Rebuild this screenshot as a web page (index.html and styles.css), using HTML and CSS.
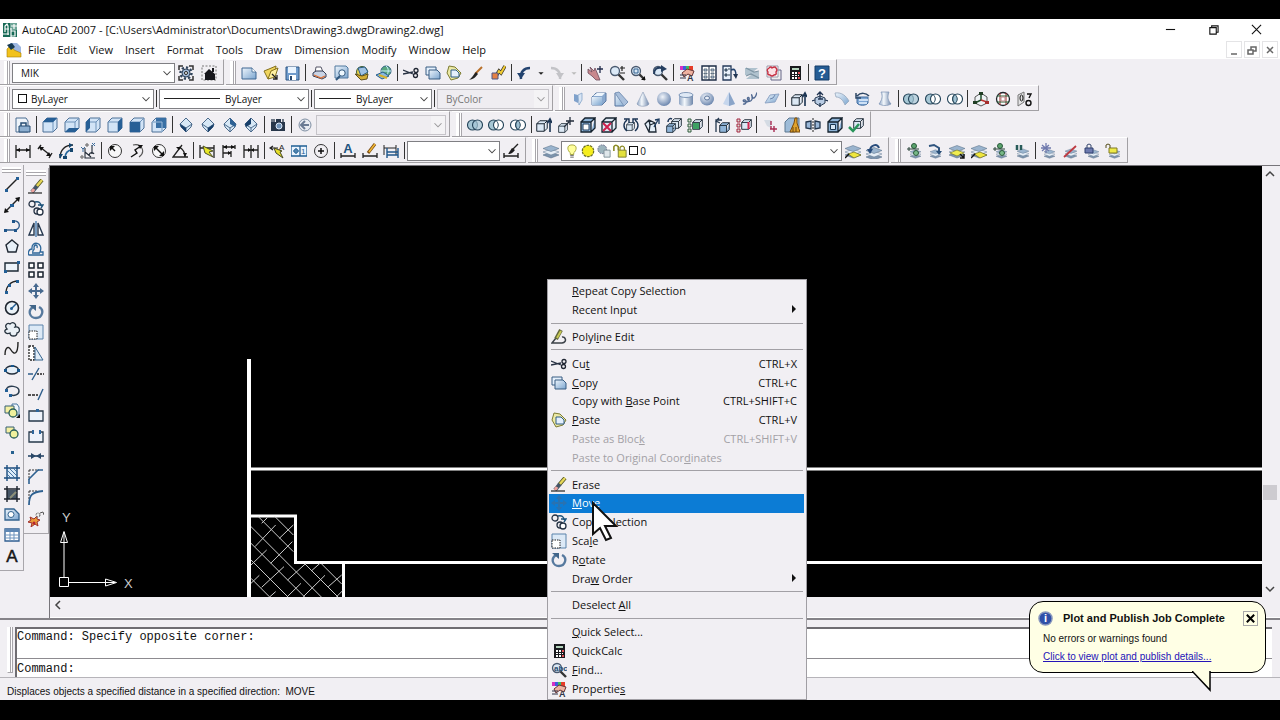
FILE: index.html
```html
<!DOCTYPE html>
<html lang="en">
<head>
<meta charset="utf-8">
<title>AutoCAD 2007</title>
<link rel="stylesheet" href="styles.css">
</head>
<body>
<svg class="sprite" aria-hidden="true">
<defs>
<linearGradient id="gb" x1="0" y1="0" x2="1" y2="1"><stop offset="0" stop-color="#eef5fc"/><stop offset="1" stop-color="#7ba5cf"/></linearGradient>
<linearGradient id="gs" x1="0" y1="0" x2="1" y2="0"><stop offset="0" stop-color="#8fa5c4"/><stop offset=".4" stop-color="#f4f8fc"/><stop offset="1" stop-color="#6f87ab"/></linearGradient>
<radialGradient id="gr" cx=".4" cy=".35" r=".7"><stop offset="0" stop-color="#f0f4fa"/><stop offset="1" stop-color="#6480aa"/></radialGradient>
</defs>
<!-- shared parts -->
<symbol id="cb" viewBox="0 0 16 16"><path d="M1 5h10v10H1zM1 5l4-4h10l-4 4M15 1v10l-4 4" fill="#dce8f4" stroke="#15222e" stroke-width="1.300"/></symbol>
<symbol id="cbb" viewBox="0 0 16 16"><path d="M1 5h10v10H1zM1 5l4-4h10l-4 4M15 1v10l-4 4" fill="#8fb4d8" stroke="#15222e" stroke-width="1.300"/></symbol>
<symbol id="ly" viewBox="0 0 16 16"><path d="M0 12l8-3 8 3-8 3z" fill="#7d94ad" stroke="#506880" stroke-width=".5"/><path d="M0 9l8-3 8 3-8 3z" fill="#e6eef6" stroke="#607890" stroke-width=".5"/><path d="M0 5.500l8-3 8 3-8 3z" fill="#9ab4ce" stroke="#506880" stroke-width=".5"/></symbol>
<symbol id="mg" viewBox="0 0 16 16"><path d="M9 9l6 6" stroke="#333" stroke-width="2.400"/><circle cx="6" cy="6" r="4.500" fill="#dbe9f7" stroke="#4a5a70" stroke-width="1.300"/></symbol>
<symbol id="chev" viewBox="0 0 16 16"><path d="M4 6l4 4 4-4" fill="none" stroke="#444" stroke-width="1.200"/></symbol>
<!-- application -->
<symbol id="app" viewBox="0 0 16 16"><path d="M1 1h14v14H1z" fill="#176a56"/><path d="M8 1h7v7H8z" fill="#6ea597"/><path d="M3 10V4l2-2 1 2v9M3 7h4M9 6v9M9 9h4v5H9M1 12h6M12 2v5M9 4h6" fill="none" stroke="#fff" stroke-width="1.200"/></symbol>
<symbol id="doc" viewBox="0 0 16 16"><path d="M4 1h7l4 4v9H4z" fill="#9db7e0"/><path d="M1 15V7l4-4 3 5 7 3v4z" fill="#f2c21c" stroke="#a67c08" stroke-width=".6"/><path d="M1 3l5-2 3 4-4 3z" fill="#173a52"/></symbol>
<symbol id="gear" viewBox="0 0 16 16"><path d="M1 5V1h4M11 1h4v4M15 11v4h-4M5 15H1v-4" fill="none" stroke="#333" stroke-width="1.500"/><circle cx="8" cy="8" r="5.500" fill="none" stroke="#31445c" stroke-width="2.500" stroke-dasharray="2.200 2"/><circle cx="8" cy="8" r="4" fill="#9fb7d6" stroke="#31445c"/><circle cx="8" cy="8" r="1.500" fill="#fff" stroke="#222"/></symbol>
<symbol id="home" viewBox="0 0 16 16"><path d="M1 1h14v14H1z" fill="none" stroke="#777" stroke-dasharray="2 1.500"/><path d="M3 9l5-5 6 5v6H4V9z" fill="#17171c"/><path d="M11 3h2v4h-2z" fill="#17171c"/></symbol>
<!-- standard -->
<symbol id="new" viewBox="0 0 16 16"><path d="M1 3h10l4 4v7H1z" fill="url(#gb)" stroke="#3f6792"/><path d="M11 3v4h4" fill="#fff" stroke="#3f6792" stroke-width=".8"/></symbol>
<symbol id="open" viewBox="0 0 16 16"><path d="M1 6l5-2 7-3-1 8-7 5z" fill="#f0d55e" stroke="#84701c"/><path d="M5 14L8 6l7-3-3 9z" fill="#fff0a0" stroke="#84701c"/><path d="M9 9l5 5M14 10v4h-4" fill="none" stroke="#222" stroke-width="1.300"/></symbol>
<symbol id="save" viewBox="0 0 16 16"><path d="M2 2h13v13H2z" fill="#6f9bcc" stroke="#2f5684"/><path d="M4 2h8v6H4z" fill="#eaf4ff"/><path d="M5 10h7v5H5z" fill="#fff"/><path d="M6 11h2v4H6z" fill="#264870"/></symbol>
<symbol id="print" viewBox="0 0 16 16"><path d="M4 8L5 2h5l2 5" fill="#fff" stroke="#556"/><path d="M2 8l3-2h7l3 3v3l-4 2-9-3z" fill="#c8d2e4" stroke="#333b52"/><path d="M3 10l7 3 4-2" fill="none" stroke="#e06f30" stroke-width="1.200"/></symbol>
<symbol id="preview" viewBox="0 0 16 16"><path d="M2 1h11l2 2v10H2z" fill="url(#gb)" stroke="#50789e"/><circle cx="9" cy="8" r="3.200" fill="#eef8ff" stroke="#31587e"/><path d="M7 11l-4 4" stroke="#31587e" stroke-width="2"/></symbol>
<symbol id="publish" viewBox="0 0 16 16"><circle cx="8" cy="7" r="5.500" fill="#e7cf48" stroke="#3e5e38"/><path d="M4 3l7-1 3 5-7 4z" fill="#9fc2e4" stroke="#2c5e86"/><path d="M1 9l7 2 6-2-1 5-6 1z" fill="#d4ae35" stroke="#60501c"/></symbol>
<symbol id="dwf" viewBox="0 0 16 16"><circle cx="10" cy="6" r="5" fill="#58a77e" stroke="#366785"/><path d="M10 1c3 2 3 7 0 10M5 6h10" fill="none" stroke="#cbefff"/><path d="M0 10l7-3 6 4-7 3z" fill="#87b8e0" stroke="#295f8c"/><path d="M3 10l8 3" stroke="#d7b22e" stroke-width="2"/></symbol>
<symbol id="cut" viewBox="0 0 16 16"><path d="M0 5l10 4M0 9l10-2" stroke="#283243" stroke-width="1.300"/><circle cx="13" cy="5.500" r="2" fill="none" stroke="#202632" stroke-width="1.300"/><circle cx="12.500" cy="10.500" r="2" fill="none" stroke="#202632" stroke-width="1.300"/></symbol>
<symbol id="copy" viewBox="0 0 16 16"><path d="M1 2h10v8H1z" fill="#e5f0fc" stroke="#385d82"/><path d="M4 5h8l3 3v6H4z" fill="url(#gb)" stroke="#385d82"/></symbol>
<symbol id="paste" viewBox="0 0 16 16"><path d="M3 1l6 1 6 6-3 5-7 2-4-7z" fill="#ece9a4" stroke="#7c7b32"/><path d="M5 5h5l3 3v4H5z" fill="#e4effc" stroke="#2d5b86"/></symbol>
<symbol id="brush" viewBox="0 0 16 16"><path d="M14 2L7 9" stroke="#b8702a" stroke-width="2"/><path d="M8 7l2 2c-3 4-5 5-9 6 3-2 4-5 7-8z" fill="#222"/></symbol>
<symbol id="block" viewBox="0 0 16 16"><path d="M15 1l-4 7-2-2-3 5" fill="none" stroke="#35322b" stroke-width="3.500"/><path d="M15 1l-4 7-2-2-3 5" fill="none" stroke="#f2cc32" stroke-width="2"/><path d="M2 8h6v6H2z" fill="#e58145" stroke="#4c5986"/></symbol>
<symbol id="undo" viewBox="0 0 16 16"><path d="M5 14C4 7 8 3 14 3" fill="none" stroke="#23436f" stroke-width="2.500"/><path d="M1 8h8l-4 6z" fill="#23436f"/></symbol>
<symbol id="redo" viewBox="0 0 16 16"><path d="M11 14C12 7 8 3 2 3" fill="none" stroke="#c3c3c7" stroke-width="2.500"/><path d="M15 8H7l4 6z" fill="#c3c3c7"/></symbol>
<symbol id="tri" viewBox="0 0 16 16"><path d="M5 7h6l-3 3z" fill="#222"/></symbol>
<symbol id="tric" viewBox="0 0 16 16"><path d="M5 7h6l-3 3z" fill="#bbb"/></symbol>
<symbol id="pan" viewBox="0 0 16 16"><path d="M1 4l4 3-2-5 4 4 1-3 3 7 2 5-4 0-4-4-4-3z" fill="#c8888d" stroke="#6d4b5c" stroke-width=".8"/><path d="M13 1v7M10 4h6" stroke="#232c4c" stroke-width="1.300"/></symbol>
<symbol id="zoomrt" viewBox="0 0 16 16"><use href="#mg"/><path d="M13 1v5M11 3h5M11 8h5" stroke="#222" stroke-width="1.200"/></symbol>
<symbol id="zoomw" viewBox="0 0 16 16"><use href="#mg"/><path d="M4 4h4v4H4z" fill="none" stroke="#31618e"/><path d="M15 11v4h-4z" fill="#111"/></symbol>
<symbol id="zoomp" viewBox="0 0 16 16"><use href="#mg"/><path d="M2 9c0-5 3-7 8-6" fill="none" stroke="#243d5f" stroke-width="2"/><path d="M9 0l6 4-6 3z" fill="#243d5f"/></symbol>
<symbol id="props" viewBox="0 0 16 16"><path d="M1 1h3v4H1z" fill="#d733c1"/><path d="M4 1h3v4H4z" fill="#4258e1"/><path d="M7 1h3v4H7z" fill="#36bd64"/><path d="M10 1h4v4h-4z" fill="#e63c28"/><path d="M3 8l5-4 7 2-2 5-4-2-4 3z" fill="#efb2a0" stroke="#633"/><path d="M1 10h6M1 13h6" fill="none" stroke="#303448" stroke-width="1.200"/><text x="8" y="15.500" font-size="9" font-weight="700" fill="#303448">A</text></symbol>
<symbol id="dc" viewBox="0 0 16 16"><path d="M1 1h14v14H1z" fill="#fff" stroke="#1c2c46" stroke-width="1.400"/><path d="M8 1v14" stroke="#1c2c46"/><path d="M3 4h3v2H3zM10 4h3v2h-3zM3 8h3v1H3zM10 8h3v1h-3zM3 11h3v2H3zM10 11h3v2h-3z" fill="#bbcde8" stroke="#456" stroke-width=".8"/></symbol>
<symbol id="tp" viewBox="0 0 16 16"><path d="M1 1h8v14H1z" fill="#eaf2fc" stroke="#253a5a" stroke-width="1.300"/><path d="M3 4h2v2H3zM3 9h2v2H3zM6 4h2M6 10h2" fill="#7390b5" stroke="#345"/><path d="M9 5c4-2 5 1 5 6" fill="none" stroke="#23426d" stroke-width="1.500"/><path d="M11 9h5l-2 5z" fill="#243753"/></symbol>
<symbol id="ssm" viewBox="0 0 16 16"><path d="M1 3h13l-5 4h6v7H2l5-4H1z" fill="#b0c2ce"/><path d="M2 3l8 4 5-1M2 11l5-2 8 4" fill="none" stroke="#7f95a4" stroke-width="1.200"/></symbol>
<symbol id="markup" viewBox="0 0 16 16"><path d="M5 5h10v10H5z" fill="#eee" stroke="#668"/><path d="M1 1h11v11H1z" fill="#fff" stroke="#99a"/><path d="M3 3q2-2 3 0 3-2 4 0 2 2 0 4 1 3-2 3-2 2-4 0-3 0-2-3-2-2 1-4z" fill="#fbe0e4" stroke="#c52f42" stroke-width="1.400"/></symbol>
<symbol id="calc" viewBox="0 0 16 16"><path d="M3 1h11v14H3z" fill="#191a1e"/><path d="M5 3h7v2H5z" fill="#b4d3bc"/><path d="M5 7h2v2H5zM8 7h2v2H8zM5 10h2v1H5zM8 10h2v1H8zM5 12h2v2H5zM8 12h2v2H8zM11 10h1v1h-1z" fill="#fff"/><path d="M11 7h2v2h-2zM11 12h2v2h-2z" fill="#df5054"/></symbol>
<symbol id="help" viewBox="0 0 16 16"><path d="M1 1h14v14H1z" fill="#255c94" stroke="#153c68"/><text x="8" y="13" font-size="13" font-weight="700" text-anchor="middle" fill="#fff">?</text></symbol>
<!-- modelling -->
<symbol id="psolid" viewBox="0 0 16 16"><path d="M4 3l4 1v8l-4-2z" fill="#7fa1cb"/><path d="M8 4l4-2v7l-3 5z" fill="#d8e5f5" stroke="#85a4c8" stroke-width=".8"/></symbol>
<symbol id="box" viewBox="0 0 16 16"><path d="M1 6l4-4h10v8l-4 4H1z" fill="#8aa9cf" stroke="#5c7ba4"/><path d="M1 6h10v8H1z" fill="url(#gb)"/><path d="M2 5l4-3h8l-3 3z" fill="#eef5fc"/></symbol>
<symbol id="wedge" viewBox="0 0 16 16"><path d="M2 2l13 9-4 4H2z" fill="url(#gb)" stroke="#54739d"/><path d="M2 2l4-1 9 10-4 4z" fill="#a9bfdb" stroke="#7b95b8"/></symbol>
<symbol id="cone" viewBox="0 0 16 16"><path d="M8 1l6 12c-2 3-10 3-12 0z" fill="url(#gs)" stroke="#8497b3" stroke-width=".6"/></symbol>
<symbol id="sphere" viewBox="0 0 16 16"><circle cx="8" cy="8" r="7" fill="url(#gr)"/></symbol>
<symbol id="cyl" viewBox="0 0 16 16"><path d="M1 4v9c2 3 12 3 14 0V4z" fill="url(#gs)"/><ellipse cx="8" cy="4" rx="7" ry="2.500" fill="#dfe9f5" stroke="#6985ab" stroke-width=".8"/></symbol>
<symbol id="torus" viewBox="0 0 16 16"><ellipse cx="8" cy="8" rx="7" ry="6.500" fill="url(#gr)"/><ellipse cx="8" cy="7" rx="2.500" ry="2" fill="#e9eff7" stroke="#5d769c"/></symbol>
<symbol id="pyr" viewBox="0 0 16 16"><path d="M8 1l6 12-6 2-6-2z" fill="#c6d6ed"/><path d="M8 1l6 12-6 2z" fill="#8aa4c8"/></symbol>
<symbol id="helix" viewBox="0 0 16 16"><path d="M1 13c4 1 4-5 1-4s4 4 5 0-3-3-1 0 5 0 4-4 0 3 2 2 3-5 2-5" fill="none" stroke="#526a92" stroke-width="1.400"/></symbol>
<symbol id="plane" viewBox="0 0 16 16"><path d="M1 12l5-8 9-1-4 8z" fill="url(#gb)" stroke="#8fa5c6"/><path d="M6 8l3-1 2-3" fill="none" stroke="#6d86ae"/></symbol>
<symbol id="extrude" viewBox="0 0 16 16"><use href="#cb" y="3" width="12" height="12"/><path d="M14 4v11M11.500 6L14 2l2 4" fill="none" stroke="#1a3352" stroke-width="1.600"/></symbol>
<symbol id="pull" viewBox="0 0 16 16"><path d="M3 7l5-2 5 2v5l-5 3-5-3z" fill="#b8cbe3" stroke="#26384f"/><path d="M8 8V1M5 4l3-3 3 3M3 9L0 10M13 9l3 1M8 12v4M6 8h5" fill="none" stroke="#223552" stroke-width="1.300"/></symbol>
<symbol id="sweep" viewBox="0 0 16 16"><path d="M1 2c7-1 11 3 14 8l-4 4C9 9 6 6 2 6z" fill="url(#gb)" stroke="#96a7bd" stroke-width=".8"/></symbol>
<symbol id="revolve" viewBox="0 0 16 16"><path d="M2 6h11v6c-2 3-9 3-11 0z" fill="#7da6d4" stroke="#426d9e"/><path d="M4 9h9M4 12h8" stroke="#e8f4ff" stroke-width="1.400"/><path d="M2 5c4-4 9-3 12 0M1 2v5h5" fill="none" stroke="#2d4766" stroke-width="1.500"/></symbol>
<symbol id="loft" viewBox="0 0 16 16"><path d="M4 1h8c-2 6-1 8 2 12-4 2-8 2-12 0C5 9 6 5 4 1z" fill="url(#gs)" stroke="#7d93b4" stroke-width=".7"/></symbol>
<symbol id="union" viewBox="0 0 16 16"><circle cx="5.500" cy="8" r="5" fill="#a6c7d5" stroke="#25455a" stroke-width="1.100"/><circle cx="10.500" cy="8" r="5" fill="#a6c7d5" fill-opacity=".7" stroke="#25455a" stroke-width="1.100"/></symbol>
<symbol id="subtract" viewBox="0 0 16 16"><circle cx="5.500" cy="8" r="5" fill="#a6c7d5" stroke="#25455a" stroke-width="1.100"/><circle cx="10.500" cy="8" r="5" fill="#fff" stroke="#25455a" stroke-width="1.100"/><path d="M8 3.500c3 3 3 6 0 9" fill="none" stroke="#25455a"/></symbol>
<symbol id="intersect" viewBox="0 0 16 16"><circle cx="5.500" cy="8" r="5" fill="#fff" stroke="#25455a" stroke-width="1.100"/><circle cx="10.500" cy="8" r="5" fill="#fff" stroke="#25455a" stroke-width="1.100"/><path d="M8 3.500c3 3 3 6 0 9-3-3-3-6 0-9z" fill="#9fc1d2" stroke="#25455a"/></symbol>
<symbol id="m3d" viewBox="0 0 16 16"><path d="M2 6l6-4 6 4v6l-6 3-6-3z" fill="#eef2f5" stroke="#555"/><path d="M8 2v7l-6 3" fill="none" stroke="#214d2b" stroke-width="1.500"/><path d="M8 9l6 2" stroke="#b33" stroke-width="1.500"/><path d="M6 1h4v3H6zM0 10h4v3H0z" fill="#213e25"/><path d="M12 10h4v3h-4z" fill="#a52d2d"/></symbol>
<symbol id="r3d" viewBox="0 0 16 16"><circle cx="8" cy="8" r="6.500" fill="#fff" stroke="#20252b" stroke-width="1.300"/><path d="M5 2v12M11 2v12" stroke="#9d2424"/><path d="M2 5h12M2 11h12" stroke="#296336"/><path d="M6 6h4v4H6z" fill="#fff" stroke="#b88"/></symbol>
<symbol id="al3d" viewBox="0 0 16 16"><path d="M2 4l6-3v10l-6 4z" fill="#e5e5e6" stroke="#777"/><ellipse cx="5.500" cy="7" rx="1.500" ry="3" fill="none" stroke="#111"/><path d="M11 3h4l-2 4" fill="none" stroke="#111" stroke-width="1.400"/><circle cx="12.500" cy="12" r="2.500" fill="none" stroke="#111" stroke-width="1.400"/></symbol>
<!-- views -->
<symbol id="nview" viewBox="0 0 16 16"><path d="M1 1h10l2 3v11H1z" fill="#eef4fa" stroke="#4b6d91"/><path d="M4 9h11v6H4z" fill="#8dafd0" stroke="#264c73"/><path d="M6 9V6h5v3" fill="none" stroke="#264c73" stroke-width="1.500"/></symbol>
<symbol id="wirecube" viewBox="0 0 16 16"><path d="M1 5l4-4h10v10l-4 4H1z" fill="#d2e4f7" stroke="#4c7097"/><path d="M1 5h10v10M11 5l4-4" fill="none" stroke="#6f93ba"/></symbol>
<symbol id="vtop" viewBox="0 0 16 16"><use href="#wirecube"/><path d="M1 5l4-4h10l-4 4z" fill="#275f96"/></symbol>
<symbol id="vbot" viewBox="0 0 16 16"><use href="#wirecube"/><path d="M1 15l4-4h10l-4 4z" fill="#275f96"/></symbol>
<symbol id="vleft" viewBox="0 0 16 16"><use href="#wirecube"/><path d="M1 5l4-4v10l-4 4z" fill="#275f96"/></symbol>
<symbol id="vright" viewBox="0 0 16 16"><use href="#wirecube"/><path d="M11 5l4-4v10l-4 4z" fill="#275f96"/></symbol>
<symbol id="vfront" viewBox="0 0 16 16"><use href="#wirecube"/><path d="M1 5h10v10H1z" fill="#275f96"/></symbol>
<symbol id="vback" viewBox="0 0 16 16"><use href="#wirecube"/><path d="M5 1h10v10H5z" fill="#386fa4"/><path d="M1 5h10v10" fill="none" stroke="#9cbbd9"/></symbol>
<symbol id="iso" viewBox="0 0 16 16"><path d="M8 1l6 6-1 3-5 5-5-5-1-3z" fill="#d7e8f6" stroke="#4c6b8c"/><path d="M2 7l6 4 6-4M8 11v4" fill="none" stroke="#4c6b8c"/></symbol>
<symbol id="vsw" viewBox="0 0 16 16"><use href="#iso"/><path d="M2 7l6 4v4l-5-5z" fill="#173f6a"/></symbol>
<symbol id="vse" viewBox="0 0 16 16"><use href="#iso"/><path d="M14 7l-6 4v4l5-5z" fill="#173f6a"/></symbol>
<symbol id="vne" viewBox="0 0 16 16"><use href="#iso"/><path d="M8 1l6 6-1 3-5-3z" fill="#2d6194"/></symbol>
<symbol id="vnw" viewBox="0 0 16 16"><use href="#iso"/><path d="M8 1L2 7l1 3 5-3z" fill="#173f6a"/></symbol>
<symbol id="camera" viewBox="0 0 16 16"><path d="M1 5h14v9H1zM6 2h5v3H6z" fill="#27364a"/><circle cx="9" cy="9" r="3" fill="#7193b8" stroke="#dce8f8"/><path d="M2 2v3M4 2v3M13 2v3" stroke="#27364a" stroke-width="1.300"/></symbol>
<symbol id="prevv" viewBox="0 0 16 16"><circle cx="8" cy="8" r="6" fill="#e7ebf1" stroke="#8090a4"/><path d="M12 8H5M8 4L4 8l4 4" fill="none" stroke="#697b93" stroke-width="2"/></symbol>
<!-- solid editing -->
<symbol id="fmove" viewBox="0 0 16 16"><use href="#cb" y="6" width="10" height="10"/><path d="M12 0v8M8 4h8M6 10l5-5" stroke="#222c3b" stroke-width="1.300"/></symbol>
<symbol id="foff" viewBox="0 0 16 16"><use href="#cbb"/><path d="M3 7h6v6H3z" fill="#fff" stroke="#203c5d"/></symbol>
<symbol id="fdel" viewBox="0 0 16 16"><use href="#cb"/><path d="M2 6l8 8M10 6l-8 8" stroke="#cd204d" stroke-width="2"/></symbol>
<symbol id="frot" viewBox="0 0 16 16"><use href="#cb" x="3" y="5" width="9" height="9"/><path d="M4 3C0 6 0 11 4 14M12 3c4 3 4 8 0 11M1 2h5v4M15 2h-5v4" fill="none" stroke="#183252" stroke-width="1.400"/></symbol>
<symbol id="ftap" viewBox="0 0 16 16"><path d="M1 7l4-4 6 3 1 9H5zM5 3l1 5-1 7M6 8l5-2" fill="#e3edf7" stroke="#202b36" stroke-width="1.300"/><path d="M10 10l4-7M11 3l4-1v5" fill="none" stroke="#1d3c60" stroke-width="1.300"/></symbol>
<symbol id="fcopy" viewBox="0 0 16 16"><use href="#cb" x="5" y="1" width="11" height="11"/><use href="#cbb" y="6" width="10" height="10"/><path d="M2 5c0-3 2-4 4-3" fill="none" stroke="#1c3558" stroke-width="1.500"/></symbol>
<symbol id="fcol" viewBox="0 0 16 16"><use href="#cb" x="5" y="2" width="11" height="11"/><path d="M6 6h6v6H6z" fill="#3da164"/><path d="M1 2h3v3H1zM1 7h3v3H1zM1 12h3v3H1z" fill="#dfe6d6" stroke="#2e5a3f"/></symbol>
<symbol id="ecopy" viewBox="0 0 16 16"><use href="#cbb" x="5" y="5" width="11" height="11"/><path d="M2 15V3h6M5 1L2 4l4 2" fill="none" stroke="#25384f" stroke-width="1.300"/></symbol>
<symbol id="ecol" viewBox="0 0 16 16"><use href="#cb" x="5" y="2" width="11" height="11"/><path d="M12.500 5v7" stroke="#d42951" stroke-width="2"/><path d="M1 2h3v3H1zM1 7h3v3H1zM1 12h3v3H1z" fill="#d9e0d6" stroke="#a52441"/></symbol>
<symbol id="imprint" viewBox="0 0 16 16"><path d="M2 3h7v8l-4-2z" fill="#d4dbe4"/><path d="M9 8V4M8 12h7M12 9v6M9 12V9" fill="none" stroke="#a92d53" stroke-width="1.400"/></symbol>
<symbol id="clean" viewBox="0 0 16 16"><path d="M1 5l4-4h10v10l-4 4H1z" fill="#9dbbd8" stroke="#5c7892"/><path d="M11 1h2v5l3 9H6l4-9z" fill="#e0a32c" stroke="#7b4a0b"/><path d="M9 10v5M12 10v5" stroke="#68440f"/></symbol>
<symbol id="separate" viewBox="0 0 16 16"><path d="M1 5l5-1v8l-5-1zM10 4l5 1v6l-5 1z" fill="#9ab7d8" stroke="#22354c" stroke-width="1.300"/><path d="M8 1v14" stroke="#222" stroke-dasharray="2 1"/></symbol>
<symbol id="shell" viewBox="0 0 16 16"><use href="#cbb"/><path d="M3.500 7.500h5v5h-5z" fill="#d6e6f4" stroke="#183650"/></symbol>
<symbol id="check" viewBox="0 0 16 16"><use href="#cb" x="5" y="1" width="11" height="11"/><path d="M1 10l4 4 6-7" fill="none" stroke="#28945a" stroke-width="2.500"/></symbol>
<!-- dimension -->
<symbol id="dlin" viewBox="0 0 16 16"><path d="M1 2v13M15 2v13M1 7h14" stroke="#222" stroke-width="1.300"/><path d="M1 7l4-2v4zM15 7l-4-2v4z" fill="#111"/></symbol>
<symbol id="dali" viewBox="0 0 16 16"><path d="M4 2L1 6M15 10l-3 5M3 4l10 8" stroke="#222" stroke-width="1.400"/><path d="M2 4h5L4 8zM14 13H9l3-4z" fill="#111"/></symbol>
<symbol id="darc" viewBox="0 0 16 16"><path d="M2 15C2 7 7 2 15 2" fill="none" stroke="#222" stroke-width="1.400"/><path d="M7 15c0-5 3-8 7-8" fill="none" stroke="#27679c" stroke-width="1.700"/><path d="M1 11h4l-3 5zM11 0v5l4-3zM5 13h4v3H5zM12 5h3v4h-3z" fill="#15466e"/></symbol>
<symbol id="dord" viewBox="0 0 16 16"><path d="M5 5v10h10M5 9l6 5M9 12c1-3 4-3 5-1M12 2v9" fill="none" stroke="#222a36" stroke-width="1.100"/><path d="M12 0l3 3M15 0l-3 3M1 4l2 2 2-2M3 6v3" fill="none" stroke="#3c6c9c"/><circle cx="7" cy="2" r="1.200" fill="none" stroke="#555"/><circle cx="2" cy="14" r="1.200" fill="none" stroke="#555"/></symbol>
<symbol id="drad" viewBox="0 0 16 16"><circle cx="8" cy="8" r="6.500" fill="#f7f7f8" stroke="#333"/><path d="M8 8L4 4" stroke="#111" stroke-width="1.400"/><path d="M3 3h5L3 8z" fill="#111"/></symbol>
<symbol id="djog" viewBox="0 0 16 16"><path d="M4 2c9-2 13 7 6 12" fill="none" stroke="#555" stroke-width="1.100"/><path d="M2 14l6-4-2-3 6-4" fill="none" stroke="#111" stroke-width="1.400"/><path d="M9 2l5 0-3 4z" fill="#111"/></symbol>
<symbol id="ddia" viewBox="0 0 16 16"><circle cx="8" cy="8" r="6.500" fill="#f7f7f8" stroke="#333"/><path d="M4 4l8 8" stroke="#111" stroke-width="1.400"/><path d="M3 3h5L3 8zM13 13H8l5-5z" fill="#111"/></symbol>
<symbol id="dang" viewBox="0 0 16 16"><path d="M10 2L1 14h15M7 4c4 2 6 5 6 10" fill="none" stroke="#222" stroke-width="1.300"/><path d="M4 4h5l-2 3zM11 10h4l-2 4z" fill="#111"/></symbol>
<symbol id="dq" viewBox="0 0 16 16"><path d="M1 2v13M15 2v13M1 5h14" stroke="#222" stroke-width="1.300"/><path d="M4 3l10 5-4 1 4 5-8-4z" fill="#e7e628" stroke="#4c5127"/></symbol>
<symbol id="dbase" viewBox="0 0 16 16"><path d="M2 2v13M14 2v4M10 8v6M2 4h12M2 10h8" stroke="#222" stroke-width="1.300"/><path d="M2 4l4-2v4zM14 4l-4-2v4zM10 10L7 8v4z" fill="#111"/></symbol>
<symbol id="dcont" viewBox="0 0 16 16"><path d="M1 2v13M8 2v13M15 2v13M1 7h14" stroke="#222" stroke-width="1.300"/><path d="M8 7L5 5v4zM8 7l3-2v4z" fill="#111"/></symbol>
<symbol id="dlead" viewBox="0 0 16 16"><path d="M1 5h8M4 3L1 5l3 2" fill="none" stroke="#222" stroke-width="1.200"/><text x="10" y="7" font-size="8" fill="#222">A</text><path d="M5 5l8 3-2 1 3 6-7-5z" fill="#e6df29" stroke="#444625"/></symbol>
<symbol id="dtol" viewBox="0 0 16 16"><path d="M0 3h16v10H0zM9 3v10" fill="#eaf3fd" stroke="#1f5f94" stroke-width="1.300"/><circle cx="5" cy="8" r="2" fill="none" stroke="#1f5f94"/><path d="M5 5v6M2 8h6" fill="none" stroke="#1f5f94"/><text x="10" y="11" font-size="8" fill="#1f5f94">1</text></symbol>
<symbol id="dcen" viewBox="0 0 16 16"><circle cx="8" cy="8" r="6.500" fill="none" stroke="#333"/><path d="M8 5v6M5 8h6" stroke="#111" stroke-width="1.500"/></symbol>
<symbol id="dedit" viewBox="0 0 16 16"><path d="M1 10v5M15 10v5M1 13h14" stroke="#222" stroke-width="1.300"/><text x="8" y="10" font-size="13" font-weight="700" text-anchor="middle" fill="#21547f">A</text></symbol>
<symbol id="dtedit" viewBox="0 0 16 16"><path d="M1 10v5M15 10v5M1 13h14" stroke="#222" stroke-width="1.300"/><path d="M13 1L6 10" stroke="#7a4b12" stroke-width="3"/><path d="M13 1L7 9" stroke="#f0b632" stroke-width="1.500"/></symbol>
<symbol id="dupd" viewBox="0 0 16 16"><path d="M1 2v10M13 2v10M1 5h12" stroke="#222"/><path d="M4 5v10M15 5v10M4 9h11M4 12h11" stroke="#20578b" stroke-width="1.400"/></symbol>
<symbol id="dstyle" viewBox="0 0 16 16"><path d="M1 10v5M15 10v5M1 13h14M15 1L9 7" stroke="#222" stroke-width="1.400"/><path d="M9 5l3 2c-3 4-5 4-7 4z" fill="#1d1c1d"/></symbol>
<!-- layers -->
<symbol id="bulb" viewBox="0 0 16 16"><path d="M8 1c7 0 5 7 2 9v2H6v-2C3 8 1 1 8 1z" fill="#ffff9c" stroke="#a1a132"/><path d="M6 13h4M6 15h4" stroke="#555"/></symbol>
<symbol id="sun" viewBox="0 0 16 16"><circle cx="8" cy="8" r="6.500" fill="#f5ed1d" stroke="#6d7026" stroke-width="1.400" stroke-dasharray="3 1"/></symbol>
<symbol id="vpf" viewBox="0 0 16 16"><circle cx="6" cy="6" r="5" fill="#9cb4bd" stroke="#668" stroke-dasharray="2 1"/><path d="M8 7h7v8H8z" fill="#dfe7eb" stroke="#798b94"/></symbol>
<symbol id="unlock" viewBox="0 0 16 16"><path d="M1 8V3q2-3 5 0v4" fill="none" stroke="#8b8a24" stroke-width="1.800"/><path d="M6 7h9v8H6z" fill="#e3e13d" stroke="#76762b"/><path d="M8 7V4q3-3 5 0v3" fill="none" stroke="#8b8a24" stroke-width="1.400"/></symbol>
<symbol id="lcur" viewBox="0 0 16 16"><use href="#ly"/><path d="M3 11l6-2 7 3-7 3z" fill="#f0e63e" stroke="#6b6a22" stroke-width=".7"/><path d="M0 15l4-4" stroke="#111" stroke-width="1.400"/></symbol>
<symbol id="lprev" viewBox="0 0 16 16"><use href="#ly" y="2"/><path d="M4 8c0-6 7-8 9-3" fill="none" stroke="#284c7c" stroke-width="2"/><path d="M1 6h6l-3 5z" fill="#284c7c"/></symbol>
<symbol id="lwalk" viewBox="0 0 16 16"><use href="#ly" x="3" y="5" width="13" height="11"/><circle cx="8" cy="3" r="2.500" fill="#5aa46d" stroke="#2b593b"/><circle cx="10" cy="10" r="2.500" fill="#77b988" stroke="#2b593b"/><path d="M1 6h4M3 4v4M5 6h8" fill="none" stroke="#284239"/></symbol>
<symbol id="lmatch" viewBox="0 0 16 16"><use href="#ly" x="2" y="5" width="13" height="11"/><path d="M2 3l5-1 5 3v5" fill="none" stroke="#2f547e" stroke-width="2"/><path d="M9 8h6l-3 4z" fill="#274d76"/></symbol>
<symbol id="lchg" viewBox="0 0 16 16"><use href="#ly"/><path d="M1 10l7-3 7 3-7 3z" fill="#f1ed4f" stroke="#777a2d" stroke-width=".7"/><path d="M15 15l-4-4M15 11v4h-4" stroke="#111" fill="none" stroke-width="1.400"/></symbol>
<symbol id="liso" viewBox="0 0 16 16"><use href="#ly" x="2" y="4" width="14" height="12"/><path d="M3 2v5M7 2v5" stroke="#285b59" stroke-width="2.500"/></symbol>
<symbol id="lfrz" viewBox="0 0 16 16"><use href="#ly" x="3" y="5" width="13" height="11"/><path d="M6 0v10M1 5h10M2 2l7 6M9 2L2 8" stroke="#6f79ad" stroke-width="1.300"/></symbol>
<symbol id="loff" viewBox="0 0 16 16"><use href="#ly" x="2" y="4" width="14" height="12"/><path d="M14 3L2 14" stroke="#bd3941" stroke-width="1.800"/></symbol>
<symbol id="llock" viewBox="0 0 16 16"><use href="#ly" x="3" y="5" width="13" height="11"/><path d="M1 5h8v5H1z" fill="#6d7aae" stroke="#2f3e6f"/><path d="M3 5V2q2-2 4 0v3" fill="none" stroke="#38486f"/></symbol>
<symbol id="lunl" viewBox="0 0 16 16"><use href="#ly" x="3" y="5" width="13" height="11"/><path d="M4 5h8v5H4z" fill="#eeea48" stroke="#807a23"/><path d="M1 5V2q2-2 4 0v3" fill="none" stroke="#554d1b"/></symbol>
<!-- draw -->
<symbol id="line" viewBox="0 0 16 16"><path d="M2 14L14 2" stroke="#222" stroke-width="1.500"/><path d="M1 13h3v3H1zM12 1h3v3h-3z" fill="#235f96"/></symbol>
<symbol id="xline" viewBox="0 0 16 16"><path d="M1 15L15 1" stroke="#222" stroke-width="1.500"/><path d="M0 16l1-5 4 4zM16 0l-5 1 4 4z" fill="#111"/><path d="M6 7h4v3H6z" fill="#235f96"/></symbol>
<symbol id="pline" viewBox="0 0 16 16"><path d="M2 12h10M9 3c8-1 8 8 2 9" fill="none" stroke="#315d8c" stroke-width="1.400"/><path d="M0 11h3v3H0zM10 11h3v3h-3zM8 2h3v3H8z" fill="#1f558a"/></symbol>
<symbol id="poly" viewBox="0 0 16 16"><path d="M8 2l6 5-2 7H4L2 7z" fill="#e7eff7" stroke="#202833" stroke-width="1.400"/></symbol>
<symbol id="rect" viewBox="0 0 16 16"><path d="M1 4h13v8H1z" fill="#eef4fb" stroke="#1b2834" stroke-width="1.400"/><path d="M0 11h3v3H0zM13 2h3v3h-3z" fill="#235f96"/></symbol>
<symbol id="arc" viewBox="0 0 16 16"><path d="M2 14C2 7 7 2 14 2" fill="none" stroke="#222" stroke-width="1.400"/><path d="M1 12h3v3H1zM4 5h3v3H4zM12 1h3v3h-3z" fill="#235f96"/></symbol>
<symbol id="circle" viewBox="0 0 16 16"><circle cx="8" cy="8" r="6.500" fill="#eaf1f7" stroke="#1c242e" stroke-width="1.600"/><path d="M7 9l5-5" stroke="#235f96" stroke-width="1.500"/><circle cx="7.500" cy="8.500" r="1.500" fill="#235f96"/></symbol>
<symbol id="cloud" viewBox="0 0 16 16"><path d="M3 8c-3-3 0-7 3-5 3-3 7 0 5 3 5-1 6 5 2 6 0 4-7 4-7 0-5 2-7-3-3-4z" fill="#eaf0f6" stroke="#27333f" stroke-width="1.300"/></symbol>
<symbol id="spline" viewBox="0 0 16 16"><path d="M1 14c0-7 3-10 6-5s7 5 7-8" fill="none" stroke="#222" stroke-width="1.400"/></symbol>
<symbol id="ellipse" viewBox="0 0 16 16"><ellipse cx="8" cy="8" rx="6.500" ry="4" fill="#e4eef7" stroke="#222e3c" stroke-width="1.300"/><path d="M0 7h3v3H0zM13 7h3v3h-3zM7 3h3v2H7z" fill="#17558b"/></symbol>
<symbol id="earc" viewBox="0 0 16 16"><path d="M2 7c2-6 13-4 13 1 0 4-5 5-8 4" fill="none" stroke="#2c3e50" stroke-width="1.500"/><path d="M1 6h3v3H1zM5 11h3v3H5z" fill="#235f96"/></symbol>
<symbol id="insb" viewBox="0 0 16 16"><path d="M8 1h5l2 3v8H8z" fill="#eef4fc" stroke="#49779f"/><path d="M1 3h9v7H1z" fill="#f5f0a2" stroke="#376073"/><circle cx="9" cy="10" r="4" fill="#eff19c" stroke="#295f59" stroke-width="1.300"/><path d="M12 15h4v-4z" fill="#111"/></symbol>
<symbol id="mkb" viewBox="0 0 16 16"><path d="M2 3h8v6H2z" fill="#f5f0a2" stroke="#376073"/><circle cx="10" cy="10" r="4" fill="#eff19c" stroke="#295f59" stroke-width="1.300"/></symbol>
<symbol id="point" viewBox="0 0 16 16"><path d="M7 7h3v3H7z" fill="#27618f"/></symbol>
<symbol id="hatch" viewBox="0 0 16 16"><path d="M3 4h10v9H3z" fill="#dcecf9"/><path d="M3 0v16M13 0v16M0 3h16M0 13h16" stroke="#1b4e7f" stroke-width="1.400"/><path d="M3 5l8 8M5 3l8 8M3 9l4 4M9 3l4 4" stroke="#376797" stroke-width=".9"/></symbol>
<symbol id="grad" viewBox="0 0 16 16"><path d="M3 4h10v9H3z" fill="#465666"/><path d="M3 0v16M13 0v16M0 3h16M0 13h16" stroke="#1b222b" stroke-width="1.400"/><path d="M6 12l6-6" stroke="#8d9079" stroke-width="2"/></symbol>
<symbol id="region" viewBox="0 0 16 16"><path d="M1 3h9l5 5v6H1z" fill="url(#gb)" stroke="#33638f" stroke-width="1.300"/><circle cx="7" cy="8.500" r="3" fill="#fff" stroke="#33638f"/></symbol>
<symbol id="table" viewBox="0 0 16 16"><path d="M1 2h14v12H1z" fill="#fff" stroke="#315f91" stroke-width="1.300"/><path d="M1 2h14v3H1z" fill="#5e87b4"/><path d="M6 5v9M10 5v9M1 8h14M1 11h14" stroke="#6d93bd"/></symbol>
<symbol id="mtext" viewBox="0 0 16 16"><text x="8" y="14" font-size="17" text-anchor="middle" fill="#161616" stroke="#161616" stroke-width=".5">A</text></symbol>
<!-- modify -->
<symbol id="erase" viewBox="0 0 16 16"><path d="M14 1L8 8" stroke="#4d5021" stroke-width="4"/><path d="M14 1L8 8" stroke="#e6d758" stroke-width="2.500"/><path d="M9 7l-5 6" stroke="#456" stroke-width="4"/><path d="M6 10l-2 3" stroke="#f0a39e" stroke-width="3"/><path d="M0 14h14" stroke="#222" stroke-width="1.200"/></symbol>
<symbol id="copyo" viewBox="0 0 16 16"><circle cx="4" cy="4" r="3" fill="none" stroke="#253244" stroke-width="1.300"/><circle cx="9" cy="11" r="3" fill="none" stroke="#253244" stroke-width="1.300"/><circle cx="12" cy="12" r="3" fill="#fff" stroke="#253244" stroke-width="1.300"/><path d="M7 2c4-1 6 1 6 4M10 5h5l-2 3" fill="none" stroke="#1d537b" stroke-width="1.400"/></symbol>
<symbol id="mirror" viewBox="0 0 16 16"><path d="M6 2v12H1zM10 2v12h5z" fill="#fff" stroke="#26384f" stroke-width="1.400"/><path d="M8 0v16" stroke="#3c75ac" stroke-width="1.300"/></symbol>
<symbol id="offset" viewBox="0 0 16 16"><path d="M1 14h14v-3h-3C16 1 3-1 4 8 0 8 0 13 1 14zM4 12h8M5 11c-1-2 2-2 1-4C6 3 10 3 9 7" fill="none" stroke="#2e679a" stroke-width="1.300"/></symbol>
<symbol id="array" viewBox="0 0 16 16"><path d="M1 1h5v5H1zM10 1h5v5h-5zM1 10h5v5H1zM10 10h5v5h-5z" fill="#fff" stroke="#17202c" stroke-width="1.500"/></symbol>
<symbol id="move" viewBox="0 0 16 16"><path d="M8 2v12M2 8h12" stroke="#47698f" stroke-width="2"/><path d="M8 0l3 4H5zM8 16l3-4H5zM0 8l4-3v6zM16 8l-4-3v6z" fill="#47698f"/></symbol>
<symbol id="rotate" viewBox="0 0 16 16"><path d="M5 3c-6 4-3 11 3 11s9-8 3-11" fill="none" stroke="#56799e" stroke-width="2.300"/><path d="M1 1h7v6z" fill="#416589"/></symbol>
<symbol id="scale" viewBox="0 0 16 16"><path d="M1 1h14v14H1z" fill="#dce9f6" stroke="#5a83ab"/><path d="M1 7h8v8H1z" fill="#fff" stroke="#222" stroke-dasharray="1.500 1"/></symbol>
<symbol id="stretch" viewBox="0 0 16 16"><path d="M1 1h5v14H1z" fill="#fff" stroke="#222" stroke-width="1.300" stroke-dasharray="2 1"/><path d="M7 2l8 13H7z" fill="#e1edf8" stroke="#34648e"/></symbol>
<symbol id="trim" viewBox="0 0 16 16"><path d="M0 8h5M4 14l7-12" stroke="#2e5e8b" stroke-width="1.400"/><path d="M9 8h7" stroke="#222" stroke-width="1.400" stroke-dasharray="2 1"/></symbol>
<symbol id="extend" viewBox="0 0 16 16"><path d="M10 14l5-11" stroke="#2e5e8b" stroke-width="1.400"/><path d="M0 9h10" stroke="#222" stroke-width="1.400" stroke-dasharray="3 1"/></symbol>
<symbol id="breakp" viewBox="0 0 16 16"><path d="M1 14V4h14v10z" fill="#edf2fa" stroke="#26384a" stroke-width="1.300"/><path d="M8 2h3v3H8z" fill="#2d659b"/></symbol>
<symbol id="break" viewBox="0 0 16 16"><path d="M5 4H1v10h14V4h-4" fill="#edf2fa" stroke="#26384a" stroke-width="1.300"/><path d="M4 2h2v4H4zM11 2h2v4h-2z" fill="#2d659b"/></symbol>
<symbol id="join" viewBox="0 0 16 16"><path d="M0 8h16" stroke="#2a4868" stroke-width="1.600"/><path d="M3 5l5 3-5 3zM13 5L8 8l5 3z" fill="#2a4868"/></symbol>
<symbol id="chamfer" viewBox="0 0 16 16"><path d="M1 1h10M1 1v10" stroke="#333" stroke-dasharray="2 1"/><path d="M1 15v-5l9-9h5" fill="none" stroke="#2e6191" stroke-width="1.600"/></symbol>
<symbol id="fillet" viewBox="0 0 16 16"><path d="M1 1h8M1 1v8" stroke="#333" stroke-dasharray="2 1"/><path d="M1 15C1 5 4 2 15 1" fill="none" stroke="#2e6191" stroke-width="1.800"/></symbol>
<symbol id="explode" viewBox="0 0 16 16"><path d="M9 5L6 8 2 6l1 3-3 2 4 1-1 4 4-3 3 2-1-4 3-2-3-1z" fill="#e99a38" stroke="#9e2e2c"/><circle cx="6" cy="12" r="1.500" fill="#b72331"/><circle cx="10" cy="4" r="2" fill="#eee" stroke="#555" stroke-dasharray="2 1"/><path d="M12 2l3-1 1 3" fill="none" stroke="#555"/></symbol>
<symbol id="pedit" viewBox="0 0 16 16"><path d="M5 9l-4 5h10c6-1 3-7 0-6" fill="none" stroke="#3b4148" stroke-width="1.500"/><path d="M10 1L5 10" stroke="#61653a" stroke-width="4"/><path d="M10 2L6 9" stroke="#c6c855" stroke-width="2"/></symbol>
<symbol id="find" viewBox="0 0 16 16"><use href="#mg"/><text x="3" y="9" font-size="8" font-weight="700" fill="#284b6f">abc</text></symbol>
</svg>

<main class="app">
<header class="titlebar">
  <svg class="ico"><use href="#app"/></svg>
  <h1>AutoCAD 2007 - [C:\Users\Administrator\Documents\Drawing3.dwgDrawing2.dwg]</h1>
  <div class="winbtns">
    <button aria-label="Minimize"><svg viewBox="0 0 12 12"><path d="M1 6h10"/></svg></button>
    <button aria-label="Restore"><svg viewBox="0 0 12 12"><path d="M2 4h7v7H2zM4 4V2h7v7H9"/></svg></button>
    <button aria-label="Close"><svg viewBox="0 0 12 12"><path d="M1 1l10 10M11 1L1 11"/></svg></button>
  </div>
</header>
<nav class="menubar">
  <svg class="ico"><use href="#doc"/></svg>
  <button>File</button><button>Edit</button><button>View</button><button>Insert</button><button>Format</button><button>Tools</button><button>Draw</button><button>Dimension</button><button>Modify</button><button>Window</button><button>Help</button>
  <div class="docbtns">
    <button aria-label="Minimize drawing"><svg viewBox="0 0 12 12"><path d="M3 10h6"/></svg></button>
    <button aria-label="Restore drawing"><svg viewBox="0 0 12 12"><path d="M2 6h5v4H2zM5 6V3h5v4H7"/></svg></button>
    <button aria-label="Close drawing"><svg viewBox="0 0 12 12"><path d="M3 3l6 6M9 3l-6 6"/></svg></button>
  </div>
</nav>

<div class="dock">
<div class="row">
  <section class="bar w-space" aria-label="Workspaces"><i class="grip"></i>
    <div class="combo"><select aria-label="Workspace"><option>MIK</option></select><svg><use href="#chev"/></svg></div>
    <button aria-label="Workspace settings"><svg><use href="#gear"/></svg></button><button aria-label="My workspace"><svg><use href="#home"/></svg></button>
  </section>
  <section class="bar w-std" aria-label="Standard"><i class="grip"></i>
    <button aria-label="New"><svg><use href="#new"/></svg></button><button aria-label="Open"><svg><use href="#open"/></svg></button><button aria-label="Save"><svg><use href="#save"/></svg></button><i class="sep"></i>
    <button aria-label="Plot"><svg><use href="#print"/></svg></button><button aria-label="Plot preview"><svg><use href="#preview"/></svg></button><button aria-label="Publish"><svg><use href="#publish"/></svg></button><button aria-label="3D DWF"><svg><use href="#dwf"/></svg></button><i class="sep"></i>
    <button aria-label="Cut"><svg><use href="#cut"/></svg></button><button aria-label="Copy"><svg><use href="#copy"/></svg></button><button aria-label="Paste"><svg><use href="#paste"/></svg></button><button aria-label="Match properties"><svg><use href="#brush"/></svg></button><button aria-label="Block editor"><svg><use href="#block"/></svg></button><i class="sep"></i>
    <button aria-label="Undo"><svg><use href="#undo"/></svg></button><button class="drop" aria-label="Undo list"><svg><use href="#tri"/></svg></button><button aria-label="Redo"><svg><use href="#redo"/></svg></button><button class="drop" aria-label="Redo list"><svg><use href="#tric"/></svg></button><i class="sep"></i>
    <button aria-label="Pan"><svg><use href="#pan"/></svg></button><button aria-label="Zoom realtime"><svg><use href="#zoomrt"/></svg></button><button aria-label="Zoom window"><svg><use href="#zoomw"/></svg></button><button aria-label="Zoom previous"><svg><use href="#zoomp"/></svg></button><i class="sep"></i>
    <button aria-label="Properties"><svg><use href="#props"/></svg></button><button aria-label="DesignCenter"><svg><use href="#dc"/></svg></button><button aria-label="Tool palettes"><svg><use href="#tp"/></svg></button><button aria-label="Sheet sets"><svg><use href="#ssm"/></svg></button><button aria-label="Markup sets"><svg><use href="#markup"/></svg></button><button aria-label="QuickCalc"><svg><use href="#calc"/></svg></button><i class="sep"></i>
    <button aria-label="Help"><svg><use href="#help"/></svg></button>
  </section>
</div>
<div class="row">
  <section class="bar w-prop" aria-label="Properties"><i class="grip"></i>
    <div class="combo c-color"><i class="swatch"></i><select aria-label="Colour"><option>ByLayer</option></select><svg><use href="#chev"/></svg></div><i class="sep"></i>
    <div class="combo c-line"><i class="rule"></i><select aria-label="Linetype"><option>ByLayer</option></select><svg><use href="#chev"/></svg></div><i class="sep"></i>
    <div class="combo c-weight"><i class="rule short"></i><select aria-label="Lineweight"><option>ByLayer</option></select><svg><use href="#chev"/></svg></div><i class="sep"></i>
    <div class="combo off"><select aria-label="Plot style" disabled><option>ByColor</option></select><svg><use href="#chev"/></svg></div>
  </section>
  <section class="bar w-model" aria-label="Modeling"><i class="grip"></i>
    <button aria-label="Polysolid"><svg><use href="#psolid"/></svg></button><button aria-label="Box"><svg><use href="#box"/></svg></button><button aria-label="Wedge"><svg><use href="#wedge"/></svg></button><button aria-label="Cone"><svg><use href="#cone"/></svg></button><button aria-label="Sphere"><svg><use href="#sphere"/></svg></button><button aria-label="Cylinder"><svg><use href="#cyl"/></svg></button><button aria-label="Torus"><svg><use href="#torus"/></svg></button><button aria-label="Pyramid"><svg><use href="#pyr"/></svg></button><button aria-label="Helix"><svg><use href="#helix"/></svg></button><button aria-label="Planar surface"><svg><use href="#plane"/></svg></button><i class="sep"></i>
    <button aria-label="Extrude"><svg><use href="#extrude"/></svg></button><button aria-label="Presspull"><svg><use href="#pull"/></svg></button><button aria-label="Sweep"><svg><use href="#sweep"/></svg></button><button aria-label="Revolve"><svg><use href="#revolve"/></svg></button><button aria-label="Loft"><svg><use href="#loft"/></svg></button><i class="sep"></i>
    <button aria-label="Union"><svg><use href="#union"/></svg></button><button aria-label="Subtract"><svg><use href="#subtract"/></svg></button><button aria-label="Intersect"><svg><use href="#intersect"/></svg></button><i class="sep"></i>
    <button aria-label="3D move"><svg><use href="#m3d"/></svg></button><button aria-label="3D rotate"><svg><use href="#r3d"/></svg></button><button aria-label="3D align"><svg><use href="#al3d"/></svg></button>
  </section>
</div>
<div class="row">
  <section class="bar w-view" aria-label="View"><i class="grip"></i>
    <button aria-label="Named views"><svg><use href="#nview"/></svg></button><i class="sep"></i>
    <button aria-label="Top"><svg><use href="#vtop"/></svg></button><button aria-label="Bottom"><svg><use href="#vbot"/></svg></button><button aria-label="Left"><svg><use href="#vleft"/></svg></button><button aria-label="Right"><svg><use href="#vright"/></svg></button><button aria-label="Front"><svg><use href="#vfront"/></svg></button><button aria-label="Back"><svg><use href="#vback"/></svg></button><i class="sep"></i>
    <button aria-label="SW isometric"><svg><use href="#vsw"/></svg></button><button aria-label="SE isometric"><svg><use href="#vse"/></svg></button><button aria-label="NE isometric"><svg><use href="#vne"/></svg></button><button aria-label="NW isometric"><svg><use href="#vnw"/></svg></button><i class="sep"></i>
    <button aria-label="Camera"><svg><use href="#camera"/></svg></button><i class="sep"></i>
    <button aria-label="Previous view"><svg><use href="#prevv"/></svg></button>
    <div class="combo off c-view"><select aria-label="View" disabled><option></option></select><svg><use href="#chev"/></svg></div>
  </section>
  <section class="bar w-solid" aria-label="Solid editing"><i class="grip"></i>
    <button aria-label="Union solids"><svg><use href="#union"/></svg></button><button aria-label="Subtract solids"><svg><use href="#subtract"/></svg></button><button aria-label="Intersect solids"><svg><use href="#intersect"/></svg></button><i class="sep"></i>
    <button aria-label="Extrude faces"><svg><use href="#extrude"/></svg></button><button aria-label="Move faces"><svg><use href="#fmove"/></svg></button><button aria-label="Offset faces"><svg><use href="#foff"/></svg></button><button aria-label="Delete faces"><svg><use href="#fdel"/></svg></button><button aria-label="Rotate faces"><svg><use href="#frot"/></svg></button><button aria-label="Taper faces"><svg><use href="#ftap"/></svg></button><button aria-label="Copy faces"><svg><use href="#fcopy"/></svg></button><button aria-label="Color faces"><svg><use href="#fcol"/></svg></button><i class="sep"></i>
    <button aria-label="Copy edges"><svg><use href="#ecopy"/></svg></button><button aria-label="Color edges"><svg><use href="#ecol"/></svg></button><i class="sep"></i>
    <button aria-label="Imprint"><svg><use href="#imprint"/></svg></button><button aria-label="Clean"><svg><use href="#clean"/></svg></button><button aria-label="Separate"><svg><use href="#separate"/></svg></button><button aria-label="Shell"><svg><use href="#shell"/></svg></button><button aria-label="Check"><svg><use href="#check"/></svg></button>
  </section>
</div>
<div class="row">
  <section class="bar w-dim" aria-label="Dimension"><i class="grip"></i>
    <button aria-label="Linear"><svg><use href="#dlin"/></svg></button><button aria-label="Aligned"><svg><use href="#dali"/></svg></button><button aria-label="Arc length"><svg><use href="#darc"/></svg></button><button aria-label="Ordinate"><svg><use href="#dord"/></svg></button><i class="sep"></i>
    <button aria-label="Radius"><svg><use href="#drad"/></svg></button><button aria-label="Jogged"><svg><use href="#djog"/></svg></button><button aria-label="Diameter"><svg><use href="#ddia"/></svg></button><button aria-label="Angular"><svg><use href="#dang"/></svg></button><i class="sep"></i>
    <button aria-label="Quick dimension"><svg><use href="#dq"/></svg></button><button aria-label="Baseline"><svg><use href="#dbase"/></svg></button><button aria-label="Continue"><svg><use href="#dcont"/></svg></button><i class="sep"></i>
    <button aria-label="Quick leader"><svg><use href="#dlead"/></svg></button><button aria-label="Tolerance"><svg><use href="#dtol"/></svg></button><button aria-label="Center mark"><svg><use href="#dcen"/></svg></button><i class="sep"></i>
    <button aria-label="Dimension edit"><svg><use href="#dedit"/></svg></button><button aria-label="Dimension text edit"><svg><use href="#dtedit"/></svg></button><button aria-label="Dimension update"><svg><use href="#dupd"/></svg></button><i class="sep"></i>
    <div class="combo c-dim"><select aria-label="Dimension style"><option></option></select><svg><use href="#chev"/></svg></div>
    <button aria-label="Dimension styles"><svg><use href="#dstyle"/></svg></button>
  </section>
  <section class="bar w-layer" aria-label="Layers"><i class="grip"></i>
    <button aria-label="Layer manager"><svg><use href="#ly"/></svg></button>
    <div class="combo c-layer"><svg><use href="#bulb"/></svg><svg><use href="#sun"/></svg><svg><use href="#vpf"/></svg><svg><use href="#unlock"/></svg><i class="swatch"></i><select aria-label="Layer"><option>0</option></select><svg><use href="#chev"/></svg></div>
    <button aria-label="Make current"><svg><use href="#lcur"/></svg></button><button aria-label="Layer previous"><svg><use href="#lprev"/></svg></button>
  </section>
  <section class="bar w-layer2" aria-label="Layers II"><i class="grip"></i>
    <button aria-label="Layer walk"><svg><use href="#lwalk"/></svg></button><button aria-label="Layer match"><svg><use href="#lmatch"/></svg></button><button aria-label="Change to current"><svg><use href="#lchg"/></svg></button><button aria-label="Copy to layer"><svg><use href="#lcur"/></svg></button><button aria-label="Layer merge"><svg><use href="#lwalk"/></svg></button><button aria-label="Layer isolate"><svg><use href="#liso"/></svg></button><i class="sep"></i>
    <button aria-label="Layer freeze"><svg><use href="#lfrz"/></svg></button><button aria-label="Layer off"><svg><use href="#loff"/></svg></button><button aria-label="Layer lock"><svg><use href="#llock"/></svg></button><button aria-label="Layer unlock"><svg><use href="#lunl"/></svg></button>
  </section>
</div>
</div>

<div class="work">
  <aside class="vbar v-draw" aria-label="Draw"><i class="hgrip"></i>
    <button aria-label="Line"><svg><use href="#line"/></svg></button><button aria-label="Construction line"><svg><use href="#xline"/></svg></button><button aria-label="Polyline"><svg><use href="#pline"/></svg></button><button aria-label="Polygon"><svg><use href="#poly"/></svg></button><button aria-label="Rectangle"><svg><use href="#rect"/></svg></button><button aria-label="Arc"><svg><use href="#arc"/></svg></button><button aria-label="Circle"><svg><use href="#circle"/></svg></button><button aria-label="Revision cloud"><svg><use href="#cloud"/></svg></button><button aria-label="Spline"><svg><use href="#spline"/></svg></button><button aria-label="Ellipse"><svg><use href="#ellipse"/></svg></button><button aria-label="Ellipse arc"><svg><use href="#earc"/></svg></button><button aria-label="Insert block"><svg><use href="#insb"/></svg></button><button aria-label="Make block"><svg><use href="#mkb"/></svg></button><button aria-label="Point"><svg><use href="#point"/></svg></button><button aria-label="Hatch"><svg><use href="#hatch"/></svg></button><button aria-label="Gradient"><svg><use href="#grad"/></svg></button><button aria-label="Region"><svg><use href="#region"/></svg></button><button aria-label="Table"><svg><use href="#table"/></svg></button><button aria-label="Multiline text"><svg><use href="#mtext"/></svg></button>
  </aside>
  <aside class="vbar v-mod" aria-label="Modify"><i class="hgrip"></i>
    <button aria-label="Erase"><svg><use href="#erase"/></svg></button><button aria-label="Copy object"><svg><use href="#copyo"/></svg></button><button aria-label="Mirror"><svg><use href="#mirror"/></svg></button><button aria-label="Offset"><svg><use href="#offset"/></svg></button><button aria-label="Array"><svg><use href="#array"/></svg></button><button aria-label="Move"><svg><use href="#move"/></svg></button><button aria-label="Rotate"><svg><use href="#rotate"/></svg></button><button aria-label="Scale"><svg><use href="#scale"/></svg></button><button aria-label="Stretch"><svg><use href="#stretch"/></svg></button><button aria-label="Trim"><svg><use href="#trim"/></svg></button><button aria-label="Extend"><svg><use href="#extend"/></svg></button><button aria-label="Break at point"><svg><use href="#breakp"/></svg></button><button aria-label="Break"><svg><use href="#break"/></svg></button><button aria-label="Join"><svg><use href="#join"/></svg></button><button aria-label="Chamfer"><svg><use href="#chamfer"/></svg></button><button aria-label="Fillet"><svg><use href="#fillet"/></svg></button><button aria-label="Explode"><svg><use href="#explode"/></svg></button>
  </aside>
  <div class="view">
    <div class="viewrow">
      <svg class="canvas" role="img" aria-label="Drawing">
        <g fill="none" stroke="#fff">
          <path d="M199 193v300" stroke-width="4"/>
          <path d="M200 303h3000" stroke-width="3"/>
          <path d="M200 350h45.500v46.500H3200M293.500 396v100" stroke-width="3"/>
          <g transform="translate(180 184) scale(.3333)" stroke="#ccc" stroke-width="3">
            <path d="M85 500l105 105M135 500l55 55M63 530l220 220M63 580l170 170M63 630l120 120M63 685l60 60M225 642l110 110M275 642l60 60"/>
            <path d="M75 590l62-65M63 645l47-45M122 640l65-65M148 565l42-40M95 712l67-62M173 690l55-50M63 700l25-24M120 740l17-15M172 740l41-40M220 740l65-64M245 662l25-22M295 710l40-35M320 740l18-18M95 520l17-17"/>
          </g>
          <path d="M9.500 411.500h9v9h-9zM14 411v-35M18 416.500h37M10.500 376.500l3.500-11 3.500 11zM55.500 413l11 3.500-11 3.500zM14 366v11M56 416.500h9"/>
        </g>
        <text x="12" y="356">Y</text><text x="74" y="422">X</text>
      </svg>
      <div class="vscroll"><svg><path d="M4 10l4-4 4 4"/></svg><i class="thumb"></i><svg><path d="M4 6l4 4 4-4"/></svg></div>
    </div>
    <div class="hscroll"><svg><path d="M10 4L6 8l4 4"/></svg></div>
  </div>
</div>

<section class="command" aria-label="Command line">
  <i class="grip"></i>
  <div class="cmdbox">
    <p>Command: Specify opposite corner:</p>
    <label><span>Command:</span><input type="text" aria-label="Command input"></label>
  </div>
</section>
<footer class="status">Displaces objects a specified distance in a specified direction:&nbsp; MOVE</footer>
</main>

<div class="ctx" role="menu">
  <button role="menuitem"><i></i><span><u>R</u>epeat Copy Selection</span></button>
  <button role="menuitem"><i></i><span>Recent Input</span><svg class="more"><path d="M2 1l4 4-4 4z"/></svg></button>
  <hr>
  <button role="menuitem"><svg><use href="#pedit"/></svg><span>Polyl<u>i</u>ne Edit</span></button>
  <hr>
  <button role="menuitem"><svg><use href="#cut"/></svg><span>Cu<u>t</u></span><kbd>CTRL+X</kbd></button>
  <button role="menuitem"><svg><use href="#copy"/></svg><span><u>C</u>opy</span><kbd>CTRL+C</kbd></button>
  <button role="menuitem"><i></i><span>Copy with <u>B</u>ase Point</span><kbd>CTRL+SHIFT+C</kbd></button>
  <button role="menuitem"><svg><use href="#paste"/></svg><span><u>P</u>aste</span><kbd>CTRL+V</kbd></button>
  <button role="menuitem" disabled><i></i><span>Paste as Bloc<u>k</u></span><kbd>CTRL+SHIFT+V</kbd></button>
  <button role="menuitem" disabled><i></i><span>Paste to Original Coor<u>d</u>inates</span></button>
  <hr>
  <button role="menuitem"><svg><use href="#erase"/></svg><span>Erase</span></button>
  <button role="menuitem" class="hot"><svg><use href="#move"/></svg><span><u>M</u>ove</span></button>
  <button role="menuitem"><svg><use href="#copyo"/></svg><span>Cop<u>y</u> Selection</span></button>
  <button role="menuitem"><svg><use href="#scale"/></svg><span>Sca<u>l</u>e</span></button>
  <button role="menuitem"><svg><use href="#rotate"/></svg><span>R<u>o</u>tate</span></button>
  <button role="menuitem"><i></i><span>Dra<u>w</u> Order</span><svg class="more"><path d="M2 1l4 4-4 4z"/></svg></button>
  <hr>
  <button role="menuitem"><i></i><span>Deselect <u>A</u>ll</span></button>
  <hr>
  <button role="menuitem"><i></i><span><u>Q</u>uick Select...</span></button>
  <button role="menuitem"><svg><use href="#calc"/></svg><span>QuickCalc</span></button>
  <button role="menuitem"><svg><use href="#find"/></svg><span><u>F</u>ind...</span></button>
  <button role="menuitem"><svg><use href="#props"/></svg><span>Propertie<u>s</u></span></button>
</div>

<aside class="balloon">
  <header><svg viewBox="0 0 16 16"><circle cx="8" cy="8" r="7" fill="#3050a8" stroke="#8a98bd" stroke-width="1.500"/><text x="8" y="12" font-size="12" font-weight="700" text-anchor="middle" fill="#fff">i</text></svg><h2>Plot and Publish Job Complete</h2><button aria-label="Close notification"><svg viewBox="0 0 12 12"><path d="M2 2l8 8M10 2l-8 8"/></svg></button></header>
  <p>No errors or warnings found</p>
  <a href="#details">Click to view plot and publish details...</a>
  <svg class="tail" viewBox="0 0 20 21"><path d="M0 0l18 19V0"/></svg>
</aside>
<svg class="cursor" viewBox="0 0 28 42"><path d="M2 2v31l7-6 6 12 5-2-6-12h11z"/></svg>
</body>
</html>
```
FILE: styles.css
```css
* { box-sizing: border-box; }
body {
  margin: 0;
  height: 100vh;
  padding: 19px 0 20px;
  background: #000;
  color: #111;
  font-family: "Open Sans", "Noto Sans", sans-serif;
  font-size: 11px;
  line-height: 16px;
  overflow: hidden;
}
button, select, input { font: inherit; color: inherit; margin: 0; padding: 0; border: 0; background: none; }
h1, h2, p { margin: 0; font-size: inherit; font-weight: 400; }
svg { display: block; flex: none; font-family: "Liberation Sans", sans-serif; }
.sprite { position: absolute; width: 0; height: 0; }
.ico { width: 16px; height: 16px; }

.app { height: 100%; display: flex; flex-direction: column; background: #f1eff3; }

.titlebar { display: flex; align-items: center; height: 21px; padding: 0 2px; gap: 4px; background: #fff; }
.titlebar h1 { flex: 1; white-space: nowrap; }
.winbtns { display: flex; }
.winbtns button { width: 43px; height: 20px; display: grid; place-items: center; }
.winbtns svg { width: 11px; height: 11px; fill: none; stroke: #111; stroke-width: 1.2; }

.menubar { display: flex; align-items: center; height: 19px; padding: 0 2px 0 6px; gap: 12px; background: #fff; }
.menubar > .ico { margin-right: -6px; }
.docbtns { display: flex; gap: 2px; margin-left: auto; }
.docbtns button { width: 16px; height: 17px; border: 1px solid #e4e4e6; display: grid; place-items: center; }
.docbtns svg { width: 12px; height: 12px; fill: none; stroke: #666; stroke-width: 1.5; }

.dock { display: flex; flex-direction: column; }
.row { display: flex; height: 26px; gap: 2px; }
.bar {
  display: flex;
  align-items: center;
  flex: none;
  height: 26px;
  padding: 1px 3px 0 4px;
  border-right: 1px solid #a2a0a4;
  border-bottom: 1px solid #a2a0a4;
  border-top: 1px solid #fff;
}
.bar > button { flex: 1; height: 22px; min-width: 0; display: flex; align-items: center; justify-content: center; }
.bar > button svg { width: 16px; height: 16px; }
.bar > button.drop { flex: 0 0 11px; }
.bar > button.drop svg { width: 14px; height: 14px; }
.grip { flex: none; align-self: stretch; width: 6px; margin-right: 2px; border: solid #a8a6ab; border-width: 0 1px; background: linear-gradient(90deg, #fff 2px, #a8a6ab 2px 3px, #fff 3px); border-left-color: #fff; }
.sep { flex: none; width: 1px; height: 17px; margin: 0 2px; background: #333; }

.w-space { width: 224px; }
.w-std { width: 611px; }
.w-prop { width: 553px; }
.w-model { width: 484px; }
.w-view { width: 450px; }
.w-solid { width: 419px; }
.w-dim { width: 526px; }
.w-layer { width: 361px; }
.w-layer2 { width: 237px; }

.combo { display: flex; align-items: center; flex: none; width: 112px; height: 20px; padding-left: 8px; background: #fff; border: 1px solid #7f7f83; font-size: 10px; }
.combo select { flex: 1; min-width: 0; appearance: none; opacity: 1; }
.combo > svg { width: 14px; height: 14px; }
.w-space .combo { width: 163px; }
.c-color { width: 142px; }
.combo.c-color { padding-left: 5px; gap: 4px; }
.c-line { width: 150px; }
.combo.c-line, .combo.c-weight { padding-left: 4px; gap: 5px; }
.combo.c-weight { width: 118px; }
.combo.c-view { width: 130px; }
.combo.c-dim { width: 93px; }
.combo.c-layer { width: 281px; padding-left: 3px; gap: 2px; }
.combo.off { background: #efedf1; border-color: #c6c4c9; color: #777; }
.combo.off > svg { height: 18px; background: #fafafa; opacity: .5; }
.swatch { flex: none; width: 9px; height: 9px; border: 1px solid #111; }
.rule { flex: none; width: 56px; height: 1px; background: #222; }
.rule.short { width: 32px; }

.work { flex: 1; min-height: 0; display: flex; padding-top: 2px; }
.vbar { flex: none; display: flex; flex-direction: column; align-self: flex-start; align-items: stretch; width: 24px; padding: 2px 1px 4px; border-right: 1px solid #a8a6ab; border-bottom: 1px solid #a8a6ab; }
.vbar > button { flex: 1; min-height: 0; display: grid; place-items: center; }
.vbar svg { width: 16px; height: 16px; }
.v-draw { height: 406px; }
.v-mod { height: 366px; margin-top: 3px; width: 25px; }
.hgrip { flex: none; height: 6px; margin: 0 1px 1px; border: solid #a8a6ab; border-width: 0 0 1px; background: linear-gradient(#fff 2px, #a8a6ab 2px 3px, #fff 3px); }
.view { flex: 1; min-width: 0; display: flex; flex-direction: column; border-left: 1px solid #77757a; }
.viewrow { flex: 1; min-height: 0; display: flex; border-top: 1px solid #77757a; }
.canvas { flex: 1; min-width: 0; height: 100%; background: #000; overflow: hidden; }
.canvas text { fill: #ccc; font-size: 13px; }
.vscroll { width: 18px; display: flex; flex-direction: column; align-items: center; padding-right: 2px; }
.vscroll svg, .hscroll svg { width: 16px; height: 16px; fill: none; stroke: #444; stroke-width: 1.5; }
.thumb { width: 14px; height: 15px; margin: auto 0 81px; background: #cdcbd0; }
.hscroll { height: 21px; border-bottom: 1px solid #fff; }

.command { display: flex; height: 59px; padding: 7px 8px 0 7px; border-top: 2px solid #858388; }
.command .grip { height: 46px; align-self: flex-start; border-bottom: 1px solid #a8a6ab; }
.cmdbox { flex: 1; height: 50px; background: #fff; border: solid #6f6d72; border-width: 2px 0 0 2px; font: 12px/17px "Liberation Mono", monospace; }
.cmdbox p { height: 30px; border-bottom: 1px solid #8d8b90; }
.cmdbox label { display: flex; height: 20px; align-items: center; }
.cmdbox input { flex: 1; min-width: 0; height: 16px; outline: 0; }
.status { height: 23px; padding: 6px 7px 0; border-top: 1px solid #b6b4b9; font-family: "Liberation Sans", sans-serif; font-size: 10px; }

.ctx { position: absolute; left: 547px; top: 279px; bottom: 20px; width: 260px; display: flex; flex-direction: column; padding: 2px 2px 1px 1px; background: #f1eff3; border: 1px solid #a09ea3; }
.ctx button { flex: 1; min-height: 0; display: flex; align-items: center; padding: 0 7px 0 2px; text-align: left; white-space: nowrap; }
.ctx button > svg:first-child { width: 16px; height: 16px; margin-right: 5px; }
.ctx button > i { width: 21px; }
.ctx span { flex: 1; }
.ctx kbd { font: inherit; }
.ctx .more { width: 7px; height: 12px; fill: #111; }
.ctx button:disabled { color: #a3a1a6; }
.ctx .hot { background: #0c7cd5; color: #fff; }
.ctx .hot svg { opacity: .5; }
.ctx hr { flex: none; width: 252px; height: 1px; margin: 3px 0 4px 2px; border: 0; background: #a2a0a5; }
.ctx u { text-underline-offset: 1px; }

.balloon { position: absolute; right: 14px; bottom: 47px; width: 237px; height: 72px; padding: 6px 7px 0 8px; border: 1px solid #000; border-radius: 14px; background: #ffffe5; font-family: "Liberation Sans", sans-serif; }
.balloon header { display: flex; align-items: center; height: 20px; }
.balloon header > svg { width: 15px; height: 15px; }
.balloon h2 { flex: 1; padding-left: 10px; font-weight: 700; }
.balloon button { width: 15px; height: 15px; border: 1px solid #aaa; display: grid; place-items: center; }
.balloon button svg { width: 11px; height: 11px; stroke: #000; stroke-width: 2.2; }
.balloon p, .balloon a { display: block; padding-left: 5px; line-height: 18px; margin-top: 2px; font-size: 10px; }
.balloon a { color: #2414b8; margin-top: 0; }
.balloon .tail { position: absolute; left: 162px; top: 69px; width: 20px; height: 21px; fill: #ffffe5; stroke: #000; stroke-width: 1.5; }
.cursor { position: absolute; left: 591px; top: 501px; width: 28px; height: 42px; fill: #fff; stroke: #111; stroke-width: 2; pointer-events: none; }
```
